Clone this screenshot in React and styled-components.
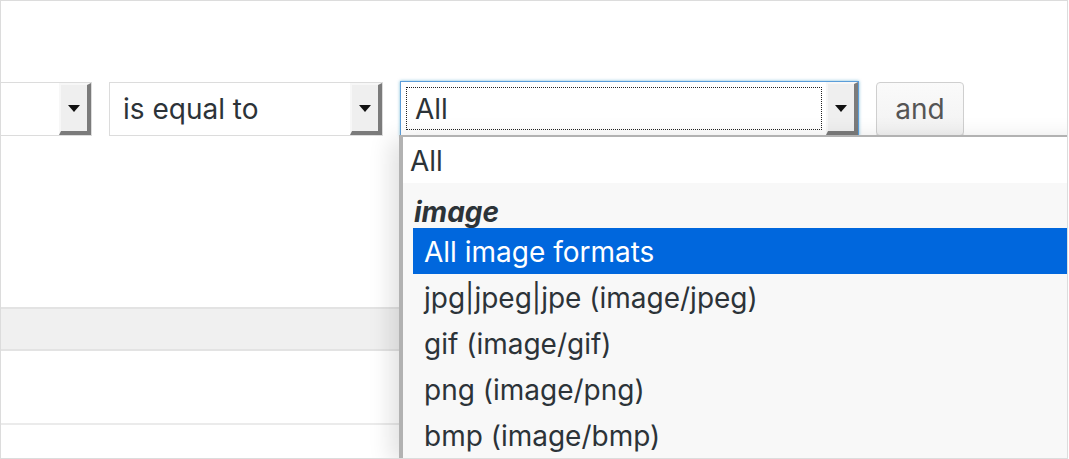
import React from 'react'
import styled, { createGlobalStyle } from 'styled-components'

const GlobalStyle = createGlobalStyle`
  html, body {
    margin: 0;
    padding: 0;
    background: #fff;
  }
  body {
    font-family: Inter, "Noto Sans", "Liberation Sans", sans-serif;
    color: #2c3338;
  }
`

export default function App() {
  return (
    <>
      <GlobalStyle />
      <Frame>
        <FilterRow>
          <Select width={91} cut>
            <SelectText />
            <ArrowBox>
              <Caret />
            </ArrowBox>
          </Select>
          <Select width={274}>
            <SelectText>is equal to</SelectText>
            <ArrowBox>
              <Caret />
            </ArrowBox>
          </Select>
          <OpenSelect>
            <FocusRing>All</FocusRing>
            <ArrowBox>
              <Caret />
            </ArrowBox>
            <Dropdown>
              <TopOption>All</TopOption>
              <Group>
                <GroupLabel>image</GroupLabel>
                <Option selected>All image formats</Option>
                <Option>jpg|jpeg|jpe (image/jpeg)</Option>
                <Option>gif (image/gif)</Option>
                <Option>png (image/png)</Option>
                <Option>bmp (image/bmp)</Option>
              </Group>
            </Dropdown>
          </OpenSelect>
          <AndBtn>and</AndBtn>
        </FilterRow>
        <TableArea>
          <HeadBand />
          <BodyRow />
        </TableArea>
      </Frame>
    </>
  )
}

const Frame = styled.div`
  position: relative;
  width: 1068px;
  height: 459px;
  box-sizing: border-box;
  border: 1px solid #dcdcdc;
  overflow: hidden;
  padding-top: 81px;
`

const FilterRow = styled.div`
  display: flex;
  align-items: flex-start;
  height: 54px;
`

const Select = styled.div`
  position: relative;
  display: flex;
  align-items: stretch;
  box-sizing: border-box;
  width: ${(p) => p.width}px;
  height: 54px;
  margin-right: 17px;
  background: #fff;
  border: 1px solid #dcdcdc;
  border-left: ${(p) => (p.cut ? 'none' : '1px solid #dcdcdc')};
`

const SelectText = styled.div`
  flex: 1;
  display: flex;
  align-items: center;
  padding-left: 13px;
  font-size: 28px;
  color: #2c3338;
  white-space: nowrap;
`

const ArrowBox = styled.div`
  width: 26px;
  flex: none;
  display: flex;
  align-items: center;
  justify-content: center;
  background: #efefef;
  border-style: solid;
  border-width: 2px 4px 4px 2px;
  border-color: #f7f7f7 #7b7b7b #7b7b7b #f7f7f7;
`

const Caret = styled.span`
  width: 0;
  height: 0;
  border-left: 6px solid transparent;
  border-right: 6px solid transparent;
  border-top: 7px solid #111;
  margin-top: 1px;
`

const OpenSelect = styled.div`
  position: relative;
  display: flex;
  align-items: stretch;
  box-sizing: border-box;
  width: 459px;
  height: 55px;
  margin-top: -1px;
  margin-right: 17px;
  padding: 5px 0 5px 5px;
  background: #fff;
  border: 1px solid #5b9dd9;
  box-shadow: 0 0 3px rgba(30, 140, 190, 0.6);
  ${ArrowBox} {
    margin: -5px 0;
  }
`

const FocusRing = styled.div`
  flex: 1;
  display: flex;
  align-items: center;
  padding-left: 8px;
  margin-right: 4px;
  border: 1px dotted #222;
  font-size: 28px;
  color: #2c3338;
`

const Dropdown = styled.div`
  position: absolute;
  left: -2px;
  top: 53px;
  width: 720px;
  z-index: 2;
  background: #f8f8f8;
  border-top: 2px solid #b2b2b2;
  border-left: 4px solid #b2b2b2;
  box-shadow: -8px 4px 22px rgba(0, 0, 0, 0.12);
  font-size: 28px;
`

const TopOption = styled.div`
  height: 46px;
  display: flex;
  align-items: center;
  padding-left: 7px;
  padding-top: 2px;
  box-sizing: border-box;
  background: #fff;
  color: #2c3338;
`

const Group = styled.div`
  padding-left: 10px;
`

const GroupLabel = styled.div`
  height: 45px;
  box-sizing: border-box;
  display: flex;
  align-items: center;
  padding: 12px 0 0 1px;
  font-weight: 700;
  font-style: italic;
  color: #2c3338;
`

const Option = styled.div`
  height: 46px;
  box-sizing: border-box;
  display: flex;
  align-items: center;
  padding: 2px 0 0 11px;
  background: ${(p) => (p.selected ? '#0067dd' : 'transparent')};
  color: ${(p) => (p.selected ? '#fff' : '#2c3338')};
  &:first-of-type {
    height: 45px;
  }
`

const AndBtn = styled.button`
  box-sizing: border-box;
  width: 88px;
  height: 54px;
  padding: 0;
  border: 1px solid #cfcfcf;
  border-radius: 4px;
  background: linear-gradient(#fafafa, #f2f2f2);
  box-shadow: 0 1px 0 #ddd;
  font-family: Inter, "Noto Sans", sans-serif;
  font-size: 28px;
  color: #555;
`

const TableArea = styled.div`
  margin-top: 171px;
`

const HeadBand = styled.div`
  height: 40px;
  background: #f0f0f0;
  border-top: 2px solid #e3e3e3;
  border-bottom: 2px solid #e3e3e3;
`

const BodyRow = styled.div`
  height: 72px;
  border-bottom: 2px solid #ebebeb;
`
